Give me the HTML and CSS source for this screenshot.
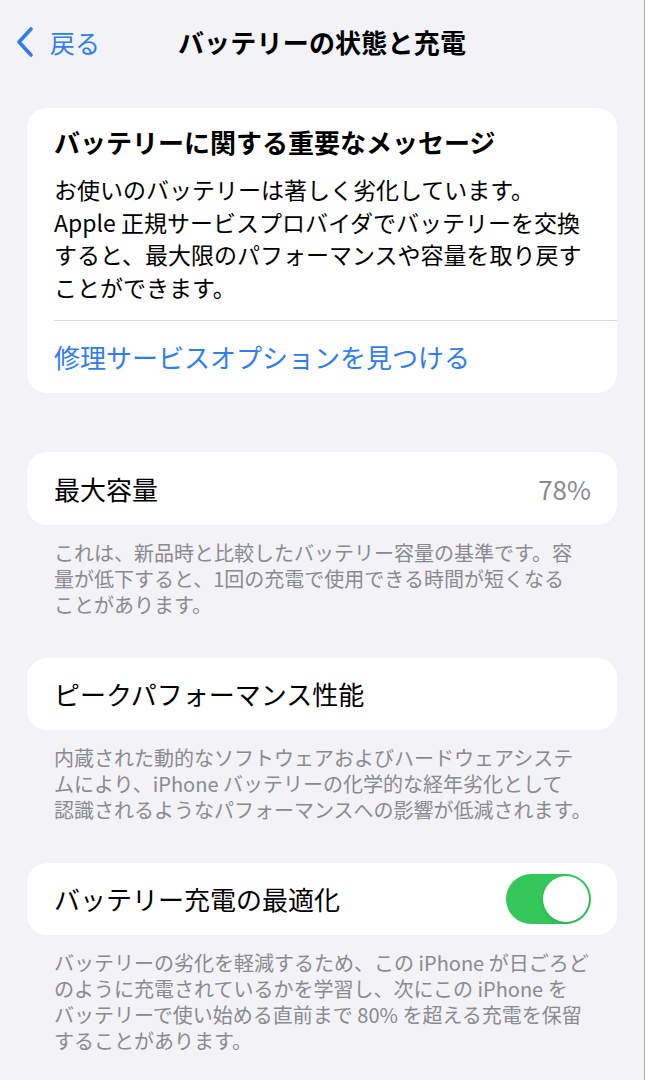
FILE: index.html
```html
<!DOCTYPE html>
<html lang="ja">
<head>
<meta charset="utf-8">
<title>バッテリーの状態と充電</title>
<link rel="stylesheet" href="styles.css">
</head>
<body>
<div class="page">
  <header class="nav">
    <a class="back">
      <svg class="chev" viewBox="0 0 20 32" width="20" height="32" aria-hidden="true">
        <path d="M16 3 L4 16 L16 29" fill="none" stroke="currentColor" stroke-width="3.6" stroke-linecap="round" stroke-linejoin="round"/>
      </svg>
      <span class="back-label">戻る</span>
    </a>
    <h1 class="title">バッテリーの状態と充電</h1>
    <span class="nav-spacer"></span>
  </header>

  <main class="content">
    <section class="card message">
      <div class="message-body">
        <h2 class="message-title">バッテリーに関する重要なメッセージ</h2>
        <p class="message-text">お使いのバッテリーは著しく劣化しています。<br>Apple 正規サービスプロバイダでバッテリーを交換<br>すると、最大限のパフォーマンスや容量を取り戻す<br>ことができます。</p>
      </div>
      <div class="link-row">
        <a class="link">修理サービスオプションを見つける</a>
      </div>
    </section>

    <section class="group first-group">
      <div class="card row tall">
        <span class="row-label">最大容量</span>
        <span class="row-value">78%</span>
      </div>
      <p class="footer">これは、新品時と比較したバッテリー容量の基準です。容<br>量が低下すると、1回の充電で使用できる時間が短くなる<br>ことがあります。</p>
    </section>

    <section class="group">
      <div class="card row">
        <span class="row-label">ピークパフォーマンス性能</span>
      </div>
      <p class="footer">内蔵された動的なソフトウェアおよびハードウェアシステ<br>ムにより、iPhone バッテリーの化学的な経年劣化として<br>認識されるようなパフォーマンスへの影響が低減されます。</p>
    </section>

    <section class="group">
      <div class="card row">
        <span class="row-label">バッテリー充電の最適化</span>
        <span class="toggle on"><span class="knob"></span></span>
      </div>
      <p class="footer">バッテリーの劣化を軽減するため、この iPhone が日ごろど<br>のように充電されているかを学習し、次にこの iPhone を<br>バッテリーで使い始める直前まで 80% を超える充電を保留<br>することがあります。</p>
    </section>
  </main>
</div>
</body>
</html>
```

FILE: styles.css
```css
html, body {
  margin: 0;
  padding: 0;
  background: #f2f2f7;
}

body {
  font-family: "Noto Sans CJK JP", "Noto Sans", "Liberation Sans", sans-serif;
  color: #000;
}

.page {
  box-sizing: border-box;
  width: 645px;
  min-height: 1080px;
  border-right: 1px solid #a9a9ae;
  overflow: hidden;
}

/* nav bar */
.nav {
  height: 84px;
  display: grid;
  grid-template-columns: 1fr auto 1fr;
  align-items: center;
}

.back {
  display: flex;
  align-items: center;
  color: #2f7cf3;
  padding-left: 14px;
  gap: 14px;
}

.chev {
  width: 22px;
  height: 32px;
  display: block;
}

.back-label {
  font-size: 25px;
  line-height: 34px;
}

.title {
  margin: 0;
  font-size: 26px;
  line-height: 34px;
  font-weight: 700;
  letter-spacing: 0.2px;
}

/* content */
.content {
  padding: 24px 27px 0;
}

.card {
  background: #fff;
  border-radius: 20px;
}

.message-body {
  padding: 17px 20px 17px 27px;
}

.message-title {
  margin: 0;
  font-size: 26px;
  line-height: 34px;
  font-weight: 700;
}

.message-text {
  margin: 14px 0 0;
  font-size: 23px;
  line-height: 32.5px;
  white-space: nowrap;
}

.link-row {
  margin-left: 27px;
  border-top: 1px solid #dcdce0;
  height: 72px;
  display: flex;
  align-items: center;
}

.link {
  color: #2f7cf3;
  font-size: 26px;
  line-height: 34px;
}

.group {
  margin-top: 40px;
}

.first-group {
  margin-top: 59px;
}

.row {
  height: 72px;
  display: flex;
  align-items: center;
  justify-content: space-between;
  padding: 0 26px 0 27px;
}

.row.tall {
  height: 73px;
}

.row-label {
  font-size: 26px;
  line-height: 34px;
}

.row-value {
  font-size: 26px;
  line-height: 34px;
  color: #8a8a8e;
}

.footer {
  margin: 15px 0 0;
  padding: 0 20px 0 27px;
  font-size: 20px;
  line-height: 26px;
  color: #8a8a8e;
  white-space: nowrap;
}

/* toggle */
.toggle {
  width: 85px;
  height: 50px;
  border-radius: 25px;
  background: #34c759;
  display: flex;
  align-items: center;
  justify-content: flex-end;
  padding: 2px;
  box-sizing: border-box;
}

.knob {
  width: 46px;
  height: 46px;
  border-radius: 50%;
  background: #fff;
  box-shadow: 0 2px 4px rgba(0, 0, 0, 0.12);
}
```
